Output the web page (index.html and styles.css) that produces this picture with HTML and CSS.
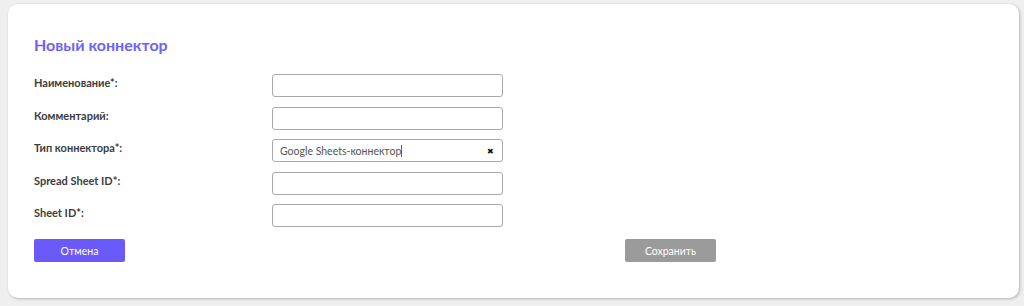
FILE: index.html
```html
<!DOCTYPE html>
<html lang="ru">
<head>
  <meta charset="UTF-8">
  <meta name="viewport" content="width=device-width, initial-scale=1.0">
  <title>Новый коннектор</title>
  <link rel="stylesheet" href="styles.css">
</head>
<body>
  <div class="card">
    <h1 class="title">Новый коннектор</h1>
    <form class="form">
      <label class="label">Наименование*:</label>
      <input class="field" type="text">

      <label class="label">Комментарий:</label>
      <input class="field" type="text">

      <label class="label">Тип коннектора*:</label>
      <div class="field select">
        <span class="value">Google Sheets-коннектор</span><span class="caret"></span>
        <span class="clear">&#10006;</span>
      </div>

      <label class="label">Spread Sheet ID*:</label>
      <input class="field" type="text">

      <label class="label">Sheet ID*:</label>
      <input class="field" type="text">
    </form>
    <div class="actions">
      <button class="btn btn-cancel" type="button">Отмена</button>
      <button class="btn btn-save" type="button">Сохранить</button>
    </div>
  </div>
</body>
</html>
```

FILE: styles.css
```css
body {
  margin: 0;
  padding: 4px 5px 7px 8px;
  background: #efefef;
  font-family: Lato, "Noto Sans", sans-serif;
  color: #333;
}
.card {
  background: #fff;
  border-radius: 10px;
  box-shadow: 1px 1px 3px rgba(0, 0, 0, 0.25);
  padding: 30px 26px 36px;
}
.title {
  margin: 0 0 18px;
  font-size: 16px;
  line-height: 22px;
  font-weight: 700;
  color: #6c63fc;
}
.form {
  display: grid;
  grid-template-columns: 238px 231px;
  row-gap: 9.5px;
  align-items: center;
}
.label {
  font-size: 11px;
  font-weight: 700;
  color: #3d3d3d;
  margin-top: -6px;
}
.field {
  box-sizing: border-box;
  height: 23px;
  width: 231px;
  margin: 0;
  border: 1px solid #a9a9b0;
  border-radius: 3px;
  background: #fff;
  font-family: inherit;
  font-size: 10.5px;
  padding: 0 7px;
}
.select {
  display: flex;
  align-items: center;
  color: #555;
}
.caret {
  width: 1px;
  height: 12px;
  background: #3b5bdb;
}
.clear {
  margin-left: auto;
  font-size: 8px;
  color: #111;
  padding-right: 1px;
}
.actions {
  display: flex;
  justify-content: space-between;
  width: 682px;
  margin-top: 12px;
}
.btn {
  width: 91px;
  height: 23px;
  border: none;
  border-radius: 2px;
  color: #fff;
  font-family: inherit;
  font-size: 10.5px;
  cursor: pointer;
}
.btn-cancel {
  background: #6a5afa;
}
.btn-save {
  background: #9b9b9b;
}
```
